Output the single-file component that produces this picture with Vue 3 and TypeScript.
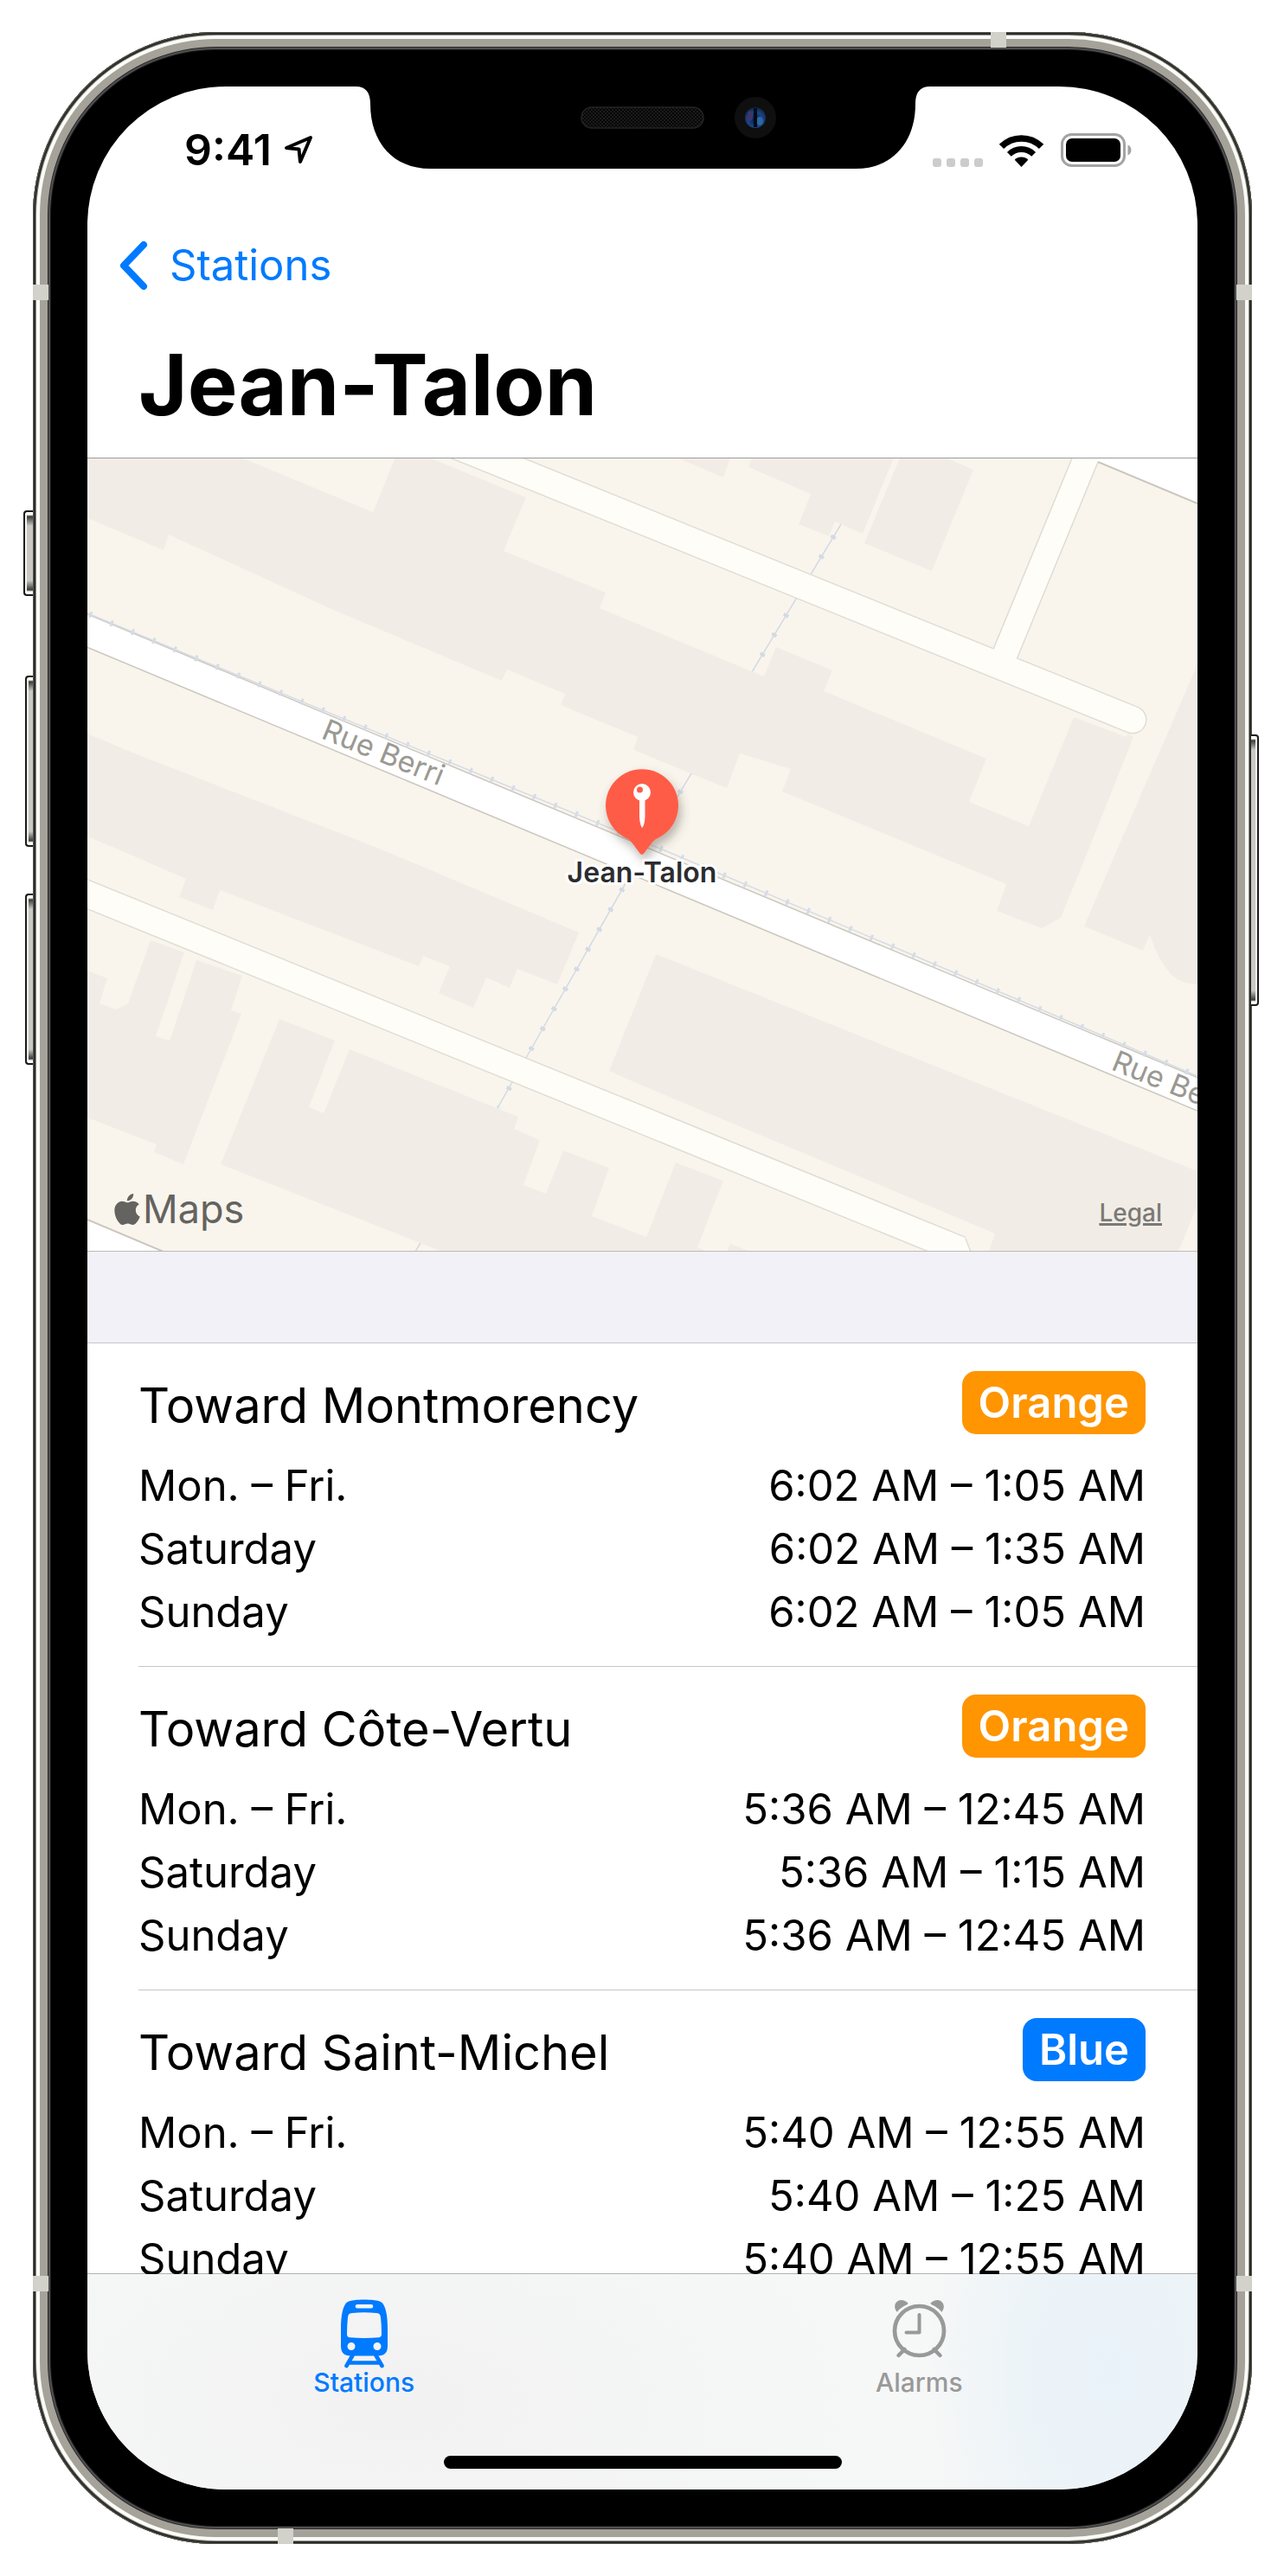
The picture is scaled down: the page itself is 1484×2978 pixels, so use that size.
<script setup lang="ts">
import { ref } from 'vue'

interface ServiceHours {
  day: string
  hours: string
}

interface Direction {
  name: string
  line: string
  tone: 'orange' | 'blue'
  service: ServiceHours[]
}

const station = 'Jean-Talon'
const activeTab = ref<'stations' | 'alarms'>('stations')

const directions: Direction[] = [
  {
    name: 'Toward Montmorency',
    line: 'Orange',
    tone: 'orange',
    service: [
      { day: 'Mon. – Fri.', hours: '6:02 AM – 1:05 AM' },
      { day: 'Saturday', hours: '6:02 AM – 1:35 AM' },
      { day: 'Sunday', hours: '6:02 AM – 1:05 AM' },
    ],
  },
  {
    name: 'Toward Côte-Vertu',
    line: 'Orange',
    tone: 'orange',
    service: [
      { day: 'Mon. – Fri.', hours: '5:36 AM – 12:45 AM' },
      { day: 'Saturday', hours: '5:36 AM – 1:15 AM' },
      { day: 'Sunday', hours: '5:36 AM – 12:45 AM' },
    ],
  },
  {
    name: 'Toward Saint-Michel',
    line: 'Blue',
    tone: 'blue',
    service: [
      { day: 'Mon. – Fri.', hours: '5:40 AM – 12:55 AM' },
      { day: 'Saturday', hours: '5:40 AM – 1:25 AM' },
      { day: 'Sunday', hours: '5:40 AM – 12:55 AM' },
    ],
  },
]

// Building footprints, in map coordinates
const buildings: string[] = [
  '101,529 279,529 431,592 457,529 496,529 608,575 582,637 700,685 693,703 883,782 897,748 962,775 952,799 1140,877 1120,927 1189,955 1241,829 1302,852 1303,848 1310,852 1259,980 1226,1061 1204,1073 1152,1053 1163,1022 904,915 914,889 855,871 840,911 732,867 737,852 648,815 653,802 586,774 580,787 385,705 195,618 189,636 101,599',
  '782,529 844,529 836,552',
  '869,529 1033,529 997,617 965,603 958,620 923,606 937,571 865,540',
  '1040,529 1093,529 1125,543 1077,660 999,628',
  '101,848 153,870 436,980 669,1078 644,1138 598,1120 589,1142 562,1130 547,1165 507,1148 520,1117 489,1105 484,1117 254,1029 246,1052 207,1037 215,1016 132,980 101,967',
  '101,1122 124,1131 115,1160 134,1167 148,1160 174,1087 213,1101 180,1198 196,1203 227,1110 280,1128 267,1168 279,1172 212,1346 178,1332 181,1323 101,1292',
  '323,1178 387,1203 357,1280 374,1287 404,1213 599,1291 594,1305 624,1318 605,1370 631,1380 651,1330 704,1350 684,1406 747,1430 781,1344 836,1365 806,1442 818,1447 511,1447 486,1437 255,1346',
  '844,1438 868,1447 840,1447',
  '758,1103 1384,1354 1384,1393 1362,1447 1143,1447 1150,1426 740,1254 704,1238',
]
</script>

<template>
  <main class="page">
    <div class="phone">
      <span class="key key-mute"></span>
      <span class="key key-up"></span>
      <span class="key key-down"></span>
      <span class="key key-power"></span>
      <span class="band band-top"></span>
      <span class="band band-bottom"></span>
      <span class="band band-left band-high"></span>
      <span class="band band-left band-low"></span>
      <span class="band band-right band-high"></span>
      <span class="band band-right band-low"></span>

      <div class="screen">
        <header class="top">
          <div class="status">
            <div class="clock">
              <span>9:41</span>
              <svg width="34" height="34" viewBox="0 0 34 34" fill="none" stroke="#000" stroke-width="4" stroke-linejoin="round" aria-hidden="true">
                <path d="M31 3 L3 15 L17.500 16.500 L19 31 Z" />
              </svg>
            </div>
            <div class="signals">
              <span class="dots"><i></i><i></i><i></i><i></i></span>
              <svg width="51" height="37" viewBox="0 0 51 37" fill="none" stroke="#000" aria-hidden="true">
                <path d="M2.450 13.450 A32.600 32.600 0 0 1 48.550 13.450" stroke-width="7.500" />
                <path d="M11.360 22.360 A20 20 0 0 1 39.640 22.360" stroke-width="6.800" />
                <path d="M25.500 37 L17.700 28.700 A11 11 0 0 1 33.300 28.700 Z" fill="#000" stroke="none" />
              </svg>
              <svg class="battery" width="82" height="39" viewBox="0 0 82 39" aria-hidden="true">
                <rect x="1.500" y="1.500" width="72" height="36" rx="11" fill="none" stroke="#a3a3a3" stroke-width="3" />
                <rect x="6" y="6" width="63" height="27" rx="7" fill="#000" />
                <path d="M77.500 13.500 C82.800 15.500 82.800 23.500 77.500 25.500 Z" fill="#a3a3a3" />
              </svg>
            </div>
          </div>

          <nav class="nav">
            <a class="back" href="#stations">
              <svg width="34" height="58" viewBox="0 0 34 58" fill="none" stroke="currentColor" stroke-width="8" stroke-linecap="round" stroke-linejoin="round" aria-hidden="true">
                <path d="M29 5 L6 29 L29 53" />
              </svg>
              <span>Stations</span>
            </a>
          </nav>
          <h1 class="title">{{ station }}</h1>
        </header>

        <section class="map" aria-label="Station map">
          <svg class="map-art" viewBox="101 530 1283 916" preserveAspectRatio="xMidYMid slice">
            <defs>
              <filter id="pin-shadow" x="-30%" y="-30%" width="170%" height="170%">
                <feDropShadow dx="3" dy="7" stdDeviation="6" flood-color="#4d4a40" flood-opacity="0.400" />
              </filter>
            </defs>
            <rect x="101" y="529" width="1283" height="918" fill="#f9f5ed" />

            <g fill="none" stroke="#d3dae3">
              <path d="M972 606 L869 777 L722 1023 L608 1223 L486 1437 L480 1447" stroke-width="1.500" />
              <path d="M972 606 L869 777 L722 1023 L608 1223 L576 1280" stroke-width="6" stroke-dasharray="4 22.400" stroke-dashoffset="-15.500" />
            </g>

            <g fill="#f1ede6">
              <polygon v-for="shape in buildings" :key="shape" :points="shape" />
              <path d="M1384 768 L1292 980 L1253 1071 L1321 1099 L1329 1080 Q1337 1108 1354 1127 Q1366 1138 1384 1138 Z" />
            </g>

            <g fill="none" stroke-linecap="round">
              <g stroke="#dfddd3" stroke-width="33">
                <path d="M500 504 L1309 832" />
                <path d="M1261 515 L1160 760" stroke-width="31" />
                <path d="M60 1017 L750 1298 L1110 1445" stroke-linecap="butt" />
              </g>
              <g stroke="#fffdf8" stroke-width="30">
                <path d="M500 504 L1309 832" />
                <path d="M1261 515 L1160 760" stroke-width="28" />
                <path d="M60 1017 L750 1298 L1110 1445" stroke-linecap="butt" />
              </g>
            </g>
            <path d="M1116 1432 L1122 1447 H1090 Z" fill="#fffdf8" />
            <path d="M1116 1432 L1122 1447" stroke="#dfddd3" stroke-width="1.500" />

            <path d="M1269 534 L1384 582 V520 H1255 Z" fill="#fff" />
            <path d="M1269 534 L1384 582" stroke="#c9c6be" stroke-width="2" />
            <path d="M101 1410 L189 1447 H101 Z" fill="#fff" />
            <path d="M101 1410 L189 1447" stroke="#c9c6be" stroke-width="2" />

            <path d="M60 712 L1420 1280" stroke="#cbc8c0" stroke-width="37" />
            <path d="M60 712 L1420 1280" stroke="#fff" stroke-width="34" />

            <g fill="none" stroke="#d6dce5">
              <path d="M101 709 L227 761 L775 986 L1043 1099 L1384 1244" stroke-width="1.500" />
              <path d="M101 709 L227 761 L775 986 L1043 1099 L1384 1244" stroke-width="7" stroke-dasharray="3 23.400" stroke-dashoffset="-2.500" />
            </g>

            <g class="street">
              <text x="370" y="853" transform="rotate(22 370 853)">Rue Berri</text>
              <text x="1283" y="1236" transform="rotate(22 1283 1236)">Rue Berri</text>
            </g>

            <path
              d="M742 988 C739 988 733 975 726 970 A42 42 0 1 1 758 970 C751 975 745 988 742 988 Z"
              fill="#ff5c47"
              filter="url(#pin-shadow)"
            />
            <path d="M739 924 H745.500 V944 Q745 954 742.200 957 Q739.500 954 739 944 Z" fill="#fff" />
            <circle cx="742" cy="916" r="10" fill="#fff" />
            <circle cx="739.500" cy="913" r="3.500" fill="#ff5c47" />
            <text class="pin-name" x="742" y="1020" text-anchor="middle">{{ station }}</text>
          </svg>

          <div class="maps-logo">
            <svg width="30" height="36" viewBox="2 0 20 24" fill="currentColor" aria-hidden="true">
              <path d="M12.152 6.896c-.948 0-2.415-1.078-3.960-1.040-2.040.027-3.910 1.183-4.961 3.014-2.117 3.675-.546 9.103 1.519 12.090 1.013 1.454 2.208 3.090 3.792 3.039 1.520-.065 2.090-.987 3.935-.987 1.831 0 2.350.987 3.960.948 1.637-.026 2.676-1.480 3.676-2.948 1.156-1.688 1.636-3.325 1.662-3.415-.039-.013-3.182-1.221-3.220-4.857-.026-3.040 2.480-4.494 2.597-4.559-1.429-2.090-3.623-2.324-4.390-2.376-2-.156-3.675 1.090-4.610 1.090zM15.530 3.830c.843-1.012 1.400-2.427 1.245-3.830-1.207.052-2.662.805-3.532 1.818-.780.896-1.454 2.338-1.273 3.714 1.338.104 2.715-.688 3.559-1.701" />
            </svg>
            <span>Maps</span>
          </div>
          <a class="legal" href="#legal">Legal</a>
        </section>

        <div class="list">
          <section v-for="direction in directions" :key="direction.name" class="direction">
            <div class="direction-head">
              <h2>{{ direction.name }}</h2>
              <span class="badge" :class="direction.tone">{{ direction.line }}</span>
            </div>
            <table class="hours">
              <tbody>
                <tr v-for="entry in direction.service" :key="entry.day">
                  <th scope="row">{{ entry.day }}</th>
                  <td>{{ entry.hours }}</td>
                </tr>
              </tbody>
            </table>
          </section>
        </div>

        <footer class="tabs">
          <button type="button" class="tab" :class="{ active: activeTab === 'stations' }" @click="activeTab = 'stations'">
            <svg width="54" height="80" viewBox="0 0 54 80" aria-hidden="true">
              <path
                fill="currentColor"
                fill-rule="evenodd"
                d="M0 34 C0 20 2 6 8 3 C13 -0.500 41 -0.500 46 3 C52 6 54 20 54 34 V54 C54 62 50 65.500 43 65.500 H11 C4 65.500 0 62 0 54 Z M19 6 A2.300 2.300 0 0 0 19 10.600 H35 A2.300 2.300 0 0 0 35 6 Z M13 16 C9 16.500 8.500 18 8 21 Q7 30 7 40 C7 43 8 44 11 44.300 Q27 45.500 43 44.300 C46 44 47 43 47 40 Q47 30 46 21 C45.500 18 45 16.500 41 16 Q27 14.500 13 16 Z M12 50 A4.500 4.500 0 1 0 12 59 A4.500 4.500 0 1 0 12 50 Z M42 50 A4.500 4.500 0 1 0 42 59 A4.500 4.500 0 1 0 42 50 Z"
              />
              <path d="M13.500 65 L6.500 77 M40.500 65 L47.500 77 M9 73.500 H45" fill="none" stroke="currentColor" stroke-width="4.600" stroke-linecap="round" />
            </svg>
            <span>Stations</span>
          </button>
          <button type="button" class="tab" :class="{ active: activeTab === 'alarms' }" @click="activeTab = 'alarms'">
            <svg width="63" height="80" viewBox="0 0 63 80" fill="none" stroke="currentColor" stroke-linecap="round" stroke-linejoin="round" aria-hidden="true">
              <circle cx="31.500" cy="36.500" r="28.500" stroke-width="4.700" />
              <path d="M31.500 18 V38.500 H16.500" stroke-width="4" />
              <path d="M14.500 58 L7.500 65 M48.500 58 L55.500 65" stroke-width="4.500" />
              <path d="M5 14 C-1 5 9 -4 18 4 C19 5 18 6 17 6.500 Q10 9.500 6.500 14 Q5.500 15 5 14 Z M58 14 C64 5 54 -4 45 4 C44 5 45 6 46 6.500 Q53 9.500 56.500 14 Q57.500 15 58 14 Z" fill="currentColor" stroke="none" />
            </svg>
            <span>Alarms</span>
          </button>
          <span class="home"></span>
        </footer>
      </div>

      <svg class="notch" width="664" height="98" viewBox="0 0 664 98" aria-hidden="true">
        <defs>
          <pattern id="mesh" width="4" height="4" patternUnits="userSpaceOnUse">
            <rect width="4" height="4" fill="#060606" />
            <circle cx="1" cy="1" r="0.900" fill="#242424" />
            <circle cx="3" cy="3" r="0.900" fill="#242424" />
          </pattern>
          <radialGradient id="lens" cx="0.500" cy="0.600" r="0.600">
            <stop offset="0" stop-color="#0b1a3d" />
            <stop offset="0.600" stop-color="#1c4585" />
            <stop offset="1" stop-color="#10233f" />
          </radialGradient>
        </defs>
        <path d="M0 0 V2 C12 2 17 9 17 22 C17 67 44 97 86 97 H578 C620 97 647 67 647 22 C647 9 652 2 664 2 V0 Z" fill="#000" />
        <rect x="261" y="26" width="141" height="24" rx="12" fill="url(#mesh)" stroke="#242424" stroke-width="1.500" />
        <circle cx="462" cy="38" r="24" fill="#0f0f0f" />
        <circle cx="462" cy="38" r="12" fill="url(#lens)" />
        <ellipse cx="456" cy="36" rx="3" ry="6" fill="#3d3570" />
        <ellipse cx="467" cy="42" rx="4" ry="5" fill="#2a68a5" />
        <rect x="460" y="27" width="4" height="22" fill="#050b18" />
      </svg>
    </div>
  </main>
</template>

<style>
body {
  background: #fff;
}
</style>

<style scoped>
.page {
  box-sizing: border-box;
  height: 100vh;
  min-height: 2200px;
  padding: 37px 37px 37px 38px;
  background: #fff;
  font-family: Inter, "Liberation Sans", sans-serif;
  color: #000;
}

.phone {
  position: relative;
  box-sizing: border-box;
  height: 100%;
  padding: 63px;
  border-radius: 212px;
  background: #000;
  box-shadow:
    inset 0 0 0 1px #55554f,
    inset 0 0 0 3px #2c2c28,
    inset 0 0 0 4px #8b8b84,
    inset 0 0 0 8px #fbfbf8,
    inset 0 0 0 17px #a5a29a,
    inset 0 0 0 18px #2a2a2a,
    inset 0 0 0 20px #505052,
    inset 0 0 0 21px #1b1b1b;
}

.screen {
  display: flex;
  flex-direction: column;
  height: 100%;
  overflow: hidden;
  border-radius: 160px;
  background: #fff;
}

.key {
  position: absolute;
  box-sizing: border-box;
  left: -9px;
  width: 9px;
  height: 198px;
  border: 2px solid #1c1c1a;
  border-right: 0;
  border-radius: 4px 0 0 4px;
  background: linear-gradient(#fff 0 3px, #3a3a38 5px, #c9c8c3 16px calc(100% - 16px), #3a3a38 calc(100% - 5px), #fff calc(100% - 3px));
  box-shadow: inset 2px 0 0 #f4f4f0;
}

.key-mute {
  top: 553px;
  left: -11px;
  width: 11px;
  height: 99px;
}

.key-up {
  top: 744px;
}

.key-down {
  top: 996px;
}

.key-power {
  top: 812px;
  right: -8px;
  left: auto;
  height: 314px;
  border-right: 2px solid #1c1c1a;
  border-left: 0;
  border-radius: 0 4px 4px 0;
  box-shadow: inset -2px 0 0 #f4f4f0;
}

.band {
  position: absolute;
  width: 18px;
  height: 18px;
  background: #d2d1ca;
}

.band-top {
  top: 0;
  right: 284px;
}

.band-bottom {
  bottom: 0;
  left: 283px;
}

.band-left {
  left: 0;
}

.band-right {
  right: 0;
}

.band-high {
  top: 292px;
}

.band-low {
  bottom: 292px;
}

.notch {
  position: absolute;
  top: 61px;
  left: calc(50% - 332px);
}

.top {
  flex: none;
  border-bottom: 1px solid #9c9c9c;
}

.status {
  display: flex;
  align-items: center;
  justify-content: space-between;
  height: 146px;
  padding: 0 76px 0 112px;
}

.clock {
  display: flex;
  align-items: center;
  gap: 14px;
  font-size: 50px;
  font-weight: 600;
  line-height: 60px;
}

.signals {
  display: flex;
  align-items: flex-end;
}

.dots {
  display: flex;
  gap: 6px;
  margin-right: 19px;
}

.dots i {
  width: 10px;
  height: 10px;
  border-radius: 3px;
  background: #ccc;
}

.battery {
  margin-left: 20px;
}

.nav {
  display: flex;
  align-items: center;
  height: 121px;
  padding: 0 36px;
}

.back {
  display: flex;
  align-items: center;
  gap: 25px;
  color: #007aff;
  font-size: 49px;
  line-height: 60px;
  text-decoration: none;
}

.title {
  margin: 0;
  padding: 0 59px 6px;
  font-size: 97px;
  font-weight: 700;
  line-height: 156px;
}

.map {
  position: relative;
  flex: none;
  height: 916px;
  overflow: hidden;
  border-bottom: 1px solid #bcbbb9;
}

.map-art {
  display: block;
  width: 100%;
  height: 100%;
}

.street {
  fill: #9a9992;
  font-size: 34px;
}

.pin-name {
  fill: #2c2c2e;
  stroke: #fff;
  stroke-width: 6px;
  stroke-linejoin: round;
  paint-order: stroke;
  font-size: 32px;
  font-weight: 600;
}

.maps-logo {
  position: absolute;
  bottom: 20px;
  left: 31px;
  display: flex;
  align-items: center;
  gap: 3px;
  color: #64635f;
  font-size: 45px;
  line-height: 56px;
}

.legal {
  position: absolute;
  right: 41px;
  bottom: 27px;
  color: #7b7975;
  font-size: 28px;
  font-weight: 500;
  line-height: 34px;
  text-decoration-thickness: 3px;
}

.list {
  flex: 1 1 0;
  min-height: 0;
  overflow-x: hidden;
  overflow-y: auto;
  padding-top: 105px;
  background: #f2f1f7;
  scrollbar-width: none;
}

.direction {
  position: relative;
  padding: 33px 60px 26px 59px;
  background: #fff;
}

.direction::before {
  position: absolute;
  top: 0;
  right: 0;
  left: 59px;
  height: 1px;
  background: #c6c6c8;
  content: "";
}

.direction:first-child::before {
  left: 0;
}

.direction-head {
  display: flex;
  align-items: flex-start;
  justify-content: space-between;
  margin-bottom: 16px;
}

.direction-head h2 {
  margin: 0;
  font-size: 56px;
  font-weight: 400;
  line-height: 80px;
}

.badge {
  padding: 0 19px;
  border-radius: 16px;
  color: #fff;
  font-size: 49px;
  font-weight: 600;
  line-height: 73px;
}

.badge.orange {
  background: #ff9500;
}

.badge.blue {
  background: #007aff;
}

.hours {
  width: 100%;
  border-collapse: collapse;
  font-size: 49px;
  line-height: 73px;
}

.hours th,
.hours td {
  padding: 0;
  font-weight: 400;
  text-align: left;
  white-space: nowrap;
}

.hours td {
  text-align: right;
}

.tabs {
  position: relative;
  z-index: 1;
  display: flex;
  flex: none;
  align-items: flex-start;
  height: 249px;
  margin-top: -1px;
  border-top: 1px solid rgba(0, 0, 0, 0.3);
  background:
    radial-gradient(ellipse 210px 320px at 92% 45%, #e9f2f9 0%, rgba(235, 243, 248, 0.800) 55%, rgba(240, 244, 247, 0) 100%),
    radial-gradient(ellipse 560px 300px at 28% 60%, #f2f2f2 0%, rgba(242, 242, 242, 0) 100%),
    #f6f7f7;
  background-clip: padding-box;
}

.tab {
  display: flex;
  flex: 1;
  flex-direction: column;
  align-items: center;
  padding: 29px 2px 0 0;
  border: 0;
  background: none;
  color: #999;
  font-family: inherit;
  font-size: 30px;
  font-weight: 500;
  line-height: 32px;
  cursor: pointer;
}

.tab.active {
  color: #007aff;
}

.home {
  position: absolute;
  bottom: 24px;
  left: calc(50% - 230px);
  width: 460px;
  height: 15px;
  border-radius: 8px;
  background: #000;
}
</style>
